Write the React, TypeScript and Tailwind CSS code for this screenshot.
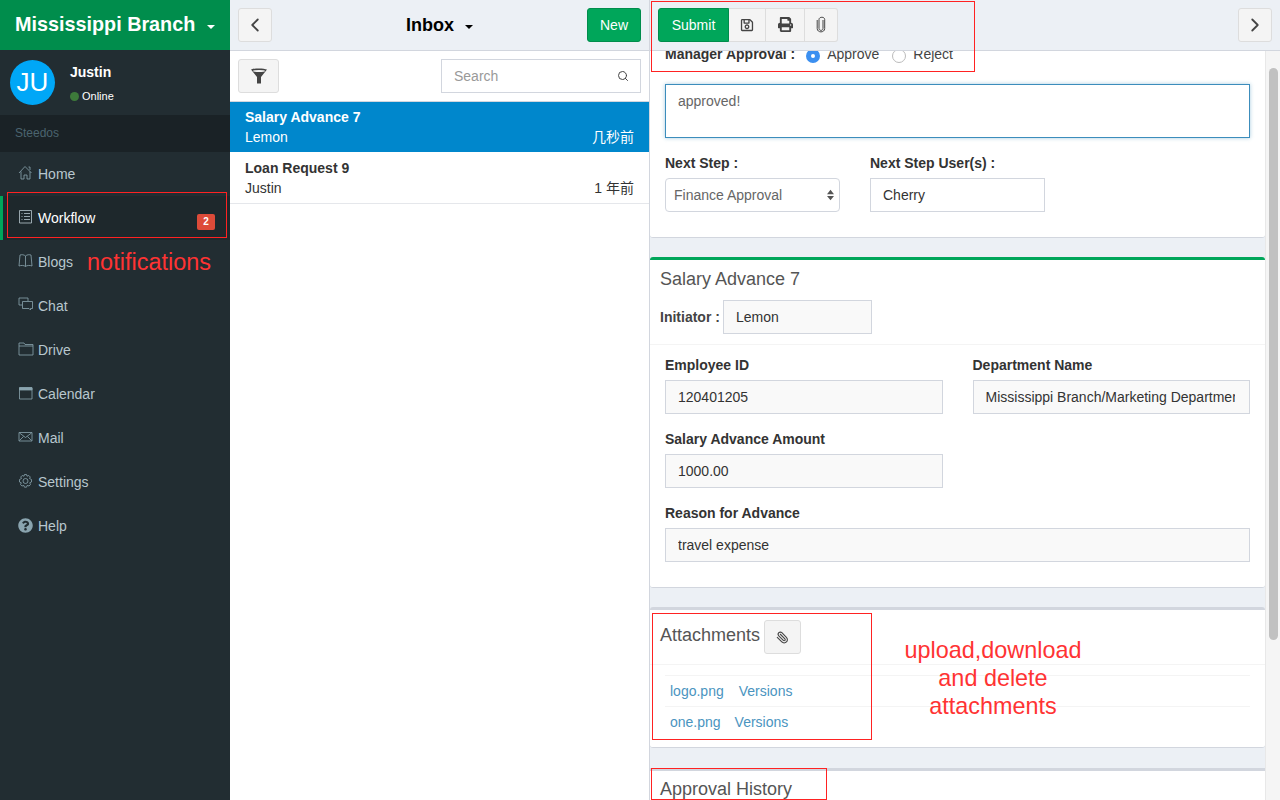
import { ReactNode } from 'react';
import { ChevronLeft, ChevronRight, Search, Paperclip } from 'lucide-react';
import { FaPrint, FaRegSave, FaQuestionCircle } from 'react-icons/fa';

const iconProps = { width: 16, height: 16, viewBox: '0 0 16 16', fill: 'none', stroke: 'currentColor', strokeWidth: 0.8 };

const menu: { label: string; icon: ReactNode; w?: boolean }[] = [
  {
    label: 'Home',
    icon: (
      <svg {...iconProps}>
        <path d="M1 8 L7 1.5 L13.5 8 M3 6.5 V14 H6 V10 H9 V14 H12 V6.5 M10.5 2 H12 V5" />
      </svg>
    ),
  },
  {
    label: 'Workflow',
    w: true,
    icon: (
      <svg {...iconProps}>
        <path d="M1.5 1.5 H13.5 V14 H1.5 Z M3.5 4.5 H4.5 M6 4.5 H12 M3.5 7.5 H4.5 M6 7.5 H12 M3.5 10.5 H4.5 M6 10.5 H12" />
      </svg>
    ),
  },
  {
    label: 'Blogs',
    icon: (
      <svg {...iconProps}>
        <path d="M7.5 3 C6 1.5 3.5 1.5 2 2 L1 13 C3 12.2 6 12.2 7.5 13.5 C9 12.2 12 12.2 14 13 L13 2 C11.5 1.5 9 1.5 7.5 3 Z M7.5 3 V13.5" />
      </svg>
    ),
  },
  {
    label: 'Chat',
    icon: (
      <svg {...iconProps}>
        <path d="M4 8 H1 V1 H10 V4 M4.5 4.5 H14.5 V11.5 H12.5 V13 L11 11.5 H4.5 Z" />
      </svg>
    ),
  },
  {
    label: 'Drive',
    icon: (
      <svg {...iconProps}>
        <path d="M1 14 V2 H6 L7 3.5 H15 V14 Z M1 5 H15" />
      </svg>
    ),
  },
  {
    label: 'Calendar',
    icon: (
      <svg {...iconProps}>
        <path d="M1.5 3 H14 V14 H1.5 Z" />
        <path d="M1.5 2.5 H14 V5 H1.5 Z" fill="currentColor" />
      </svg>
    ),
  },
  {
    label: 'Mail',
    icon: (
      <svg {...iconProps}>
        <path d="M1 3.5 H14 V12 H1 Z M1.5 4 L7.5 8.5 L13.5 4 M1.5 11.5 L5.5 7.5 M13.5 11.5 L9.5 7.5" />
      </svg>
    ),
  },
  {
    label: 'Settings',
    icon: (
      <svg {...iconProps}>
        <circle cx="7.5" cy="8" r="2.5" />
        <path d="M6.5 1.5 H8.5 L9 3.2 L10.8 2.5 L12.3 4 L11.5 5.5 L13.5 6.5 V9 L11.7 9.8 L12.5 11.6 L11 13 L9.2 12.4 L8.5 14.2 H6.5 L5.8 12.4 L4 13 L2.5 11.6 L3.3 9.8 L1.5 9 V6.5 L3.5 5.5 L2.7 4 L4.2 2.5 L6 3.2 Z" />
      </svg>
    ),
  },
  { label: 'Help', icon: <FaQuestionCircle size={15} /> },
];

function Sidebar() {
  return (
    <aside className="w-[230px] shrink-0 bg-[#222d32] flex flex-col">
      <div className="h-[50px] bg-[#008d4c] flex items-center justify-between pl-[15px] pr-[15px]">
        <span className="text-white font-bold text-[19.8px]">Mississippi Branch</span>
        <span className="w-0 h-0 border-x-4 border-x-transparent border-t-4 border-t-white mt-1" />
      </div>
      <div className="h-[65px] flex pl-[10px] pt-[10px]">
        <div className="w-[45px] h-[45px] rounded-full bg-[#00a7f7] flex items-center justify-center text-white text-[26px]">JU</div>
        <div className="ml-[15px]">
          <div className="text-white font-bold text-sm mt-[2px]">Justin</div>
          <div className="flex items-center text-white text-[11px] mt-[6px]">
            <span className="w-[9px] h-[9px] rounded-full bg-[#3d7a3a] mr-[3px]" />
            Online
          </div>
        </div>
      </div>
      <div className="h-[37px] bg-[#1a2226] flex items-center pl-[15px] pb-[2px] text-xs text-[#4b646f]">Steedos</div>
      <nav>
        {menu.map((m) => (
          <div
            key={m.label}
            className={`h-[44px] flex items-center border-l-[3px] pl-[15px] text-sm ${
              m.w ? 'bg-[#1e282c] border-[#00a65a] text-white' : 'border-transparent text-[#b8c7ce]'
            }`}
          >
            <span className={`w-[20px] mb-[2px] ${m.w ? 'text-[#b8c7ce]' : 'text-[#8aa4af]'}`}>{m.icon}</span>
            {m.label}
            {m.w && (
              <span className="ml-auto mr-[15px] mt-[8px] w-[18px] h-[16px] rounded-[2px] bg-[#dd4b39] text-white text-[10px] font-bold flex items-center justify-center">
                2
              </span>
            )}
          </div>
        ))}
      </nav>
    </aside>
  );
}

function SquareBtn({ children, w = 'w-[34px]' }: { children: ReactNode; w?: string }) {
  return (
    <button className={`${w} h-[34px] bg-[#f4f4f4] border border-[#ddd] rounded-[3px] flex items-center justify-center text-[#444]`}>
      {children}
    </button>
  );
}

function ListPane() {
  return (
    <section className="w-[420px] shrink-0 border-r border-[#d2d6de] bg-white flex flex-col">
      <div className="h-[51px] bg-[#ecf0f5] border-b border-[#d2d6de] flex items-center justify-between pl-[8px] pr-[8px] pb-[1px]">
        <SquareBtn>
          <ChevronLeft size={22} strokeWidth={2} />
        </SquareBtn>
        <div className="flex items-center text-black font-bold text-lg ml-[20px] mt-[1px]">
          Inbox
          <span className="ml-[11px] mt-[3px] w-0 h-0 border-x-4 border-x-transparent border-t-4 border-t-black" />
        </div>
        <button className="w-[54px] h-[34px] bg-[#00a65a] border border-[#008d4c] rounded-[3px] text-white text-sm">New</button>
      </div>
      <div className="h-[51px] flex items-center justify-between pl-[8px] pr-[8px] border-b border-[#d2d6de]">
        <SquareBtn w="w-[41px]">
          <svg width="18" height="17" viewBox="0 0 18 17" fill="currentColor">
            <path d="M1 1.5 C4 0 14 0 17 1.5 L11 9 V15.5 L7 15.5 V9 Z" />
            <ellipse cx="9" cy="3" rx="6" ry="1" fill="#f4f4f4" />
          </svg>
        </SquareBtn>
        <div className="w-[200px] h-[34px] border border-[#d2d6de] flex items-center justify-between pl-[12px] pr-[11px] text-sm text-[#999]">
          Search
          <Search size={12} className="text-[#444]" />
        </div>
      </div>
      <div className="h-[50px] bg-[#0087cc] text-white pl-[15px] pr-[15px] pt-[5px] text-sm">
        <div className="font-bold leading-[20px]">Salary Advance 7</div>
        <div className="flex justify-between leading-[20px]">
          <span>Lemon</span>
          <span>几秒前</span>
        </div>
      </div>
      <div className="h-[52px] border-b border-[#e5e7eb] text-[#333] pl-[15px] pr-[15px] pt-[6px] text-sm">
        <div className="font-bold leading-[20px]">Loan Request 9</div>
        <div className="flex justify-between leading-[20px]">
          <span>Justin</span>
          <span>1 年前</span>
        </div>
      </div>
    </section>
  );
}

function Field({ label, value, className }: { label: string; value: string; className: string }) {
  return (
    <div className={className}>
      <div className="text-sm font-bold text-[#333] leading-[20px] mb-[5px]">{label}</div>
      <div className="h-[34px] bg-[#f9f9f9] border border-[#d2d6de] pl-[12px] pr-[14px] flex items-center text-sm text-[#333]">
        <span className="overflow-hidden whitespace-nowrap">{value}</span>
      </div>
    </div>
  );
}

function DetailPane() {
  return (
    <section className="flex-1 min-w-0 flex flex-col bg-[#ecf0f5]">
      <div className="h-[51px] shrink-0 border-b border-[#d2d6de] flex items-center justify-between pl-[8px] pr-[8px] pb-[1px]">
        <div className="flex">
          <button className="w-[71px] h-[34px] bg-[#00a65a] border border-[#008d4c] rounded-l-[3px] text-white text-sm">Submit</button>
          <button className="w-[37px] h-[34px] bg-[#f4f4f4] border border-l-0 border-[#ddd] flex items-center justify-center text-[#444]">
            <FaRegSave size={14} />
          </button>
          <button className="w-[39px] h-[34px] bg-[#f4f4f4] border border-l-0 border-[#ddd] flex items-center justify-center text-[#444]">
            <FaPrint size={15} />
          </button>
          <button className="w-[33px] h-[34px] bg-[#f4f4f4] border border-l-0 border-[#ddd] rounded-r-[3px] flex items-center justify-center text-[#444]">
            <svg width="10" height="17" viewBox="0 0 10 17" fill="none" stroke="currentColor" strokeWidth="1">
              <path d="M7 4 V12.5 C7 15 3 15 3 12.5 V3.5 C3 0.5 8.7 0.5 8.7 3.5 V12.5 C8.7 17 1.2 17 1.2 12.5 V4" />
            </svg>
          </button>
        </div>
        <SquareBtn>
          <ChevronRight size={22} strokeWidth={2} />
        </SquareBtn>
      </div>
      <div className="flex-1 min-h-0 overflow-hidden flex">
        <div className="flex-1 min-w-0">
          <div className="bg-white h-[194px] rounded-b-[3px] border-b border-[#d2d6de] pl-[15px] pr-[15px] -mt-[7px]">
            <div className="flex items-center h-[20px] text-sm text-[#333]">
              <span className="font-bold mr-[10px]">Manager Approval :</span>
              <span className="w-[14px] h-[14px] rounded-full bg-[#3b8ff0] flex items-center justify-center mr-[7px] ml-[1px] mt-[4px]">
                <span className="w-[4px] h-[4px] rounded-full bg-white" />
              </span>
              <span className="mr-[13px] text-[#444]">Approve</span>
              <span className="w-[14px] h-[14px] rounded-full border border-[#bbb] mr-[7px] mt-[4px]" />
              <span className="text-[#444]">Reject</span>
            </div>
            <div className="mt-[20px] h-[54px] border border-[#3c8dbc] shadow-[0_0_4px_rgba(60,141,188,0.45)] pl-[12px] pt-[6px] text-sm text-[#666]">approved!</div>
            <div className="flex mt-[15px]">
              <div className="w-[175px]">
                <div className="text-sm font-bold text-[#333] leading-[20px] mb-[5px]">Next Step :</div>
                <div className="h-[34px] border border-[#d2d6de] rounded-[4px] pl-[8px] pr-[5px] flex items-center justify-between text-sm text-[#666]">
                  Finance Approval
                  <svg width="7" height="12" viewBox="0 0 8 12" fill="#555">
                    <path d="M4 0 L8 5 H0 Z M4 12 L0 7 H8 Z" />
                  </svg>
                </div>
              </div>
              <div className="ml-[30px] w-[175px]">
                <div className="text-sm font-bold text-[#333] leading-[20px] mb-[5px]">Next Step User(s) :</div>
                <div className="h-[34px] border border-[#d2d6de] pl-[12px] flex items-center text-sm text-[#333]">Cherry</div>
              </div>
            </div>
          </div>

          <div className="mt-[19px] h-[331px] bg-white border-t-[3px] border-[#00a65a] border-b border-b-[#d2d6de] rounded-[3px]">
            <div className="text-lg text-[#555] pl-[10px] pt-[7px] leading-[24px]">Salary Advance 7</div>
            <div className="flex items-center pl-[10px] mt-[9px] text-sm pb-[10px] border-b border-[#f4f4f4]">
              <span className="font-bold text-[#444] mr-[3px]">Initiator :</span>
              <div className="w-[149px] h-[34px] bg-[#f9f9f9] border border-[#d2d6de] pl-[12px] flex items-center text-[#333]">Lemon</div>
            </div>
            <div className="grid grid-cols-2 gap-x-[30px] gap-y-[15px] pl-[15px] pr-[15px] pt-[10px]">
              <Field label="Employee ID" value="120401205" className="min-w-0" />
              <Field label="Department Name" value="Mississippi Branch/Marketing Department" className="min-w-0" />
              <Field label="Salary Advance Amount" value="1000.00" className="min-w-0" />
              <div />
              <Field label="Reason for Advance" value="travel expense" className="col-span-2" />
            </div>
          </div>

          <div className="mt-[19px] h-[141px] bg-white border-t-[3px] border-[#d2d6de] border-b border-b-[#d2d6de] rounded-[3px]">
            <div className="flex items-center pl-[10px] h-[55px] border-b border-[#f4f4f4] text-lg text-[#555]">
              <span className="mb-[4px]">Attachments</span>
              <button className="ml-[4px] w-[37px] h-[34px] bg-[#f4f4f4] border border-[#ddd] rounded-[3px] flex items-center justify-center text-[#444]">
                <Paperclip size={13} className="-scale-x-100" />
              </button>
            </div>
            <div className="pl-[15px] pr-[15px] pt-[10px] text-sm text-[#4a94c0]">
              <div className="h-[31px] border-t border-[#f4f4f4] pl-[5px] flex items-center gap-[15px]">
                <span>logo.png</span>
                <span>Versions</span>
              </div>
              <div className="h-[31px] border-t border-[#f4f4f4] pl-[5px] flex items-center gap-[14px]">
                <span>one.png</span>
                <span>Versions</span>
              </div>
            </div>
          </div>

          <div className="mt-[20px] bg-white border-t-[3px] border-[#d2d6de] h-[60px] pl-[10px] pt-[6px] text-lg text-[#555] leading-[24px]">Approval History</div>
        </div>
        <div className="w-[15px] shrink-0 bg-[#f5f5f5] border-l border-[#e8e8e8] pt-[17px] pl-[3px]">
          <div className="w-[9px] h-[572px] rounded-full bg-[#c1c1c1]" />
        </div>
      </div>
    </section>
  );
}

export default function App() {
  return (
    <div className="relative w-[1280px] h-[800px] overflow-hidden flex font-['Liberation_Sans','Noto_Sans_CJK_SC',sans-serif]">
      <Sidebar />
      <ListPane />
      <DetailPane />

      {/* red annotations drawn on top of the screenshot */}
      <div className="absolute left-[7px] top-[192px] w-[220px] h-[46px] border border-[#f22]" />
      <div className="absolute left-[87px] top-[248px] text-[23.5px] leading-[28px] text-[#f33]">notifications</div>
      <div className="absolute left-[651px] top-[1px] w-[324px] h-[71px] border border-[#f22]" />
      <div className="absolute left-[652px] top-[613px] w-[220px] h-[127px] border border-[#f22]" />
      <div className="absolute left-[651px] top-[768px] w-[176px] h-[32px] border border-[#f22]" />
      <div className="absolute left-[893px] top-[636px] w-[200px] text-center text-[23.4px] leading-[28px] text-[#f33]">
        upload,download
        <br />
        and delete
        <br />
        attachments
      </div>
    </div>
  );
}
